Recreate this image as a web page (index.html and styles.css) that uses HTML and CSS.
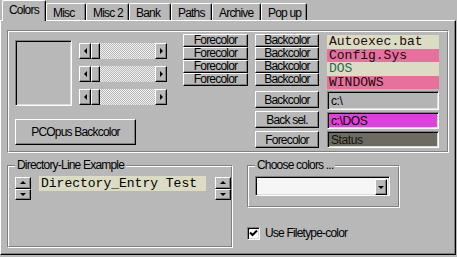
FILE: index.html
```html
<!DOCTYPE html>
<html lang="en">

<head>
    <meta charset="UTF-8">
    <title>Colors</title>
    <link rel="stylesheet" href="styles.css">
</head>

<body>
    <div class="tabs">
        <div class="tab active">Colors</div>
        <div class="tab">Misc</div>
        <div class="tab">Misc 2</div>
        <div class="tab">Bank</div>
        <div class="tab">Paths</div>
        <div class="tab">Archive</div>
        <div class="tab">Pop up</div>
    </div>

    <div class="page">
        <!-- colour settings -->
        <div class="etch top-group">
            <div class="etch-in top-inner">
                <div class="col-preview">
                    <div class="preview-row">
                        <div class="preview sunken"></div>
                        <div class="scrolls">
                            <div class="scroll"><span class="sbtn"><i class="arr-l"></i></span><span class="thumb"></span><span class="track"></span><span class="sbtn"><i class="arr-r"></i></span></div>
                            <div class="scroll"><span class="sbtn"><i class="arr-l"></i></span><span class="thumb"></span><span class="track"></span><span class="sbtn"><i class="arr-r"></i></span></div>
                            <div class="scroll"><span class="sbtn"><i class="arr-l"></i></span><span class="thumb"></span><span class="track"></span><span class="sbtn"><i class="arr-r"></i></span></div>
                        </div>
                    </div>
                    <div class="btn big">PCOpus Backcolor</div>
                </div>

                <div class="col-fore">
                    <div class="btn small">Forecolor</div>
                    <div class="btn small">Forecolor</div>
                    <div class="btn small">Forecolor</div>
                    <div class="btn small">Forecolor</div>
                </div>

                <div class="col-back">
                    <div class="btn small">Backcolor</div>
                    <div class="btn small">Backcolor</div>
                    <div class="btn small">Backcolor</div>
                    <div class="btn small">Backcolor</div>
                    <div class="btn tall first">Backcolor</div>
                    <div class="btn tall">Back sel.</div>
                    <div class="btn tall">Forecolor</div>
                </div>

                <div class="col-samples">
                    <div class="sample cream">Autoexec.bat</div>
                    <div class="sample pink">Config.Sys</div>
                    <div class="sample cream green">DOS</div>
                    <div class="sample pink">WINDOWS</div>
                    <div class="field sunken dir first">c:\</div>
                    <div class="field sunken sel">c:\DOS</div>
                    <div class="field sunken status">Status</div>
                </div>
            </div>
        </div>

        <div class="bottom">
            <div class="etch dir-group">
                <div class="etch-in group-in">
                    <span class="legend">Directory-Line Example</span>
                    <div class="dir-row">
                        <div class="spin">
                            <span class="spin-btn"><i class="arr-u"></i></span>
                            <span class="spin-btn"><i class="arr-d"></i></span>
                        </div>
                        <div class="dir-text">Directory_Entry Test</div>
                        <div class="spin right">
                            <span class="spin-btn"><i class="arr-u"></i></span>
                            <span class="spin-btn"><i class="arr-d"></i></span>
                        </div>
                    </div>
                </div>
            </div>

            <div class="right-col">
                <div class="etch choose-group">
                    <div class="etch-in group-in choose-in">
                        <span class="legend">Choose colors ...</span>
                        <div class="combo sunken">
                            <span class="combo-btn"><i class="arr-d"></i></span>
                        </div>
                    </div>
                </div>
                <div class="check">
                    <span class="check-box sunken">
                        <svg width="9" height="9" viewBox="0 0 9 9">
                            <path d="M1 3.5 L3.5 6 L8 1.5" stroke="#000" stroke-width="2" fill="none" />
                        </svg>
                    </span>
                    Use Filetype-color
                </div>
            </div>
        </div>
    </div>
</body>

</html>
```

FILE: styles.css
```css
body {
    margin: 0;
    width: 457px;
    height: 257px;
    background: #b8b8b8;
    font-family: "Liberation Sans", Arial, sans-serif;
    font-size: 12px;
    letter-spacing: -0.8px;
    color: #000;
    overflow: hidden;
}

/* tabs */
.tabs {
    display: flex;
    align-items: flex-end;
    height: 20px;
    padding-left: 2px;
}

.tab {
    height: 17px;
    box-sizing: border-box;
    padding: 2px 0 0 6px;
    border: 1px solid;
    border-color: #fff #000 transparent #fff;
    border-bottom: 0;
    border-radius: 2px 2px 0 0;
    box-shadow: inset -1px 0 #808080;
    line-height: 14px;
}

.tab:nth-child(2) { width: 40px; }
.tab:nth-child(3) { width: 43px; }
.tab:nth-child(4) { width: 42px; }
.tab:nth-child(5) { width: 41px; }
.tab:nth-child(6) { width: 49px; }
.tab:nth-child(7) { width: 46px; }

.tab.active {
    position: relative;
    z-index: 1;
    width: 44px;
    height: 21px;
    margin-bottom: -1px;
    padding: 2px 0 0 6px;
    background: #b8b8b8;
}

/* page */
.page {
    width: 456px;
    height: 235px;
    box-sizing: border-box;
    border: 1px solid;
    border-color: #fff #000 #000 #fff;
    box-shadow: inset -1px -1px #808080;
    padding: 9px 0 0 6px;
}

.etch {
    box-sizing: border-box;
    border: 1px solid;
    border-color: #808080 #fff #fff #808080;
}

.etch-in {
    height: 100%;
    box-sizing: border-box;
    border: 1px solid;
    border-color: #fff #808080 #808080 #fff;
}

.top-group {
    width: 442px;
    height: 123px;
}

.top-inner {
    display: flex;
    padding: 2px 0 0 6px;
}

/* bevels */
.btn,
.sbtn,
.thumb,
.spin-btn,
.combo-btn {
    box-sizing: border-box;
    border: 1px solid;
    border-color: #fff #000 #000 #fff;
    box-shadow: inset -1px -1px #808080;
    background: #b8b8b8;
}

.sunken {
    box-sizing: border-box;
    border: 1px solid;
    border-color: #808080 #fff #fff #808080;
    box-shadow: inset 1px 1px #000, inset -1px -1px #dcdcdc;
}

.btn {
    display: flex;
    align-items: center;
    justify-content: center;
}

.btn.small {
    height: 13px;
    line-height: 11px;
}

.btn.tall {
    height: 17px;
    margin-top: 3px;
}

.btn.tall.first {
    margin-top: 5px;
}

.btn.big {
    width: 121px;
    height: 26px;
    margin-top: 13px;
}

/* preview + scrollbars */
.col-preview {
    width: 152px;
    padding-top: 6px;
}

.preview-row {
    display: flex;
    gap: 7px;
}

.preview {
    width: 57px;
    height: 66px;
}

.scrolls {
    display: flex;
    flex-direction: column;
    gap: 7px;
    padding-top: 3px;
    width: 88px;
}

.scroll {
    display: flex;
    height: 16px;
}

.sbtn {
    width: 12px;
    display: flex;
    align-items: center;
    justify-content: center;
}

.thumb {
    width: 9px;
}

.track {
    flex: 1;
    background-color: #fff;
    background-image: repeating-conic-gradient(#b8b8b8 0 25%, #f0f0f0 0 50%);
    background-size: 2px 2px;
}

.arr-l,
.arr-r,
.arr-u,
.arr-d {
    display: block;
    width: 0;
    height: 0;
    border: 3px solid transparent;
}

.arr-l {
    border-right-color: #000;
    border-left-width: 0;
}

.arr-r {
    border-left-color: #000;
    border-right-width: 0;
}

.arr-u {
    border-bottom-color: #000;
    border-top-width: 0;
}

.arr-d {
    border-top-color: #000;
    border-bottom-width: 0;
}

/* button columns */
.col-fore {
    width: 65px;
    margin-left: 16px;
}

.col-back {
    width: 64px;
    margin-left: 7px;
}

.col-samples {
    width: 112px;
    margin-left: 8px;
    padding-top: 1px;
}

.sample {
    height: 13.5px;
    line-height: 14px;
    padding-left: 2px;
    font-family: "Liberation Mono", "Courier New", monospace;
    font-size: 13px;
    letter-spacing: 0;
    color: #200808;
    overflow: hidden;
}

.cream {
    background: #dcdcc4;
}

.pink {
    background: #e8709f;
}

.green {
    color: #1e6a4e;
}

.field {
    height: 17px;
    margin-top: 2px;
    padding-left: 3px;
    line-height: 16px;
    letter-spacing: -0.4px;
}

.field.first {
    height: 19px;
    line-height: 18px;
}

.field.dir {
    background: #b4b4b4;
}

.field.sel {
    background: #e040dc;
}

.field.status {
    background: #6e6b60;
    color: #111;
}

/* bottom area */
.bottom {
    display: flex;
    margin-top: 12px;
}

.group-in {
    position: relative;
}

.legend {
    position: absolute;
    top: -9px;
    left: 6px;
    padding: 0 2px;
    background: #b8b8b8;
    line-height: 14px;
}

.dir-group {
    width: 226px;
    height: 83px;
}

.dir-group .group-in {
    padding: 10px 0 0 6px;
}

.dir-row {
    display: flex;
    align-items: flex-start;
}

.spin {
    display: flex;
    flex-direction: column;
    width: 16px;
}

.spin.right {
    margin-left: 9px;
}

.spin-btn {
    height: 11.5px;
    display: flex;
    align-items: center;
    justify-content: center;
}

.dir-text {
    width: 167px;
    height: 15px;
    margin: -1px 0 0 8px;
    padding-left: 2px;
    box-sizing: border-box;
    background: #dcdcc4;
    font-family: "Liberation Mono", "Courier New", monospace;
    font-size: 13px;
    letter-spacing: 0;
    line-height: 15px;
}

.right-col {
    margin-left: 14px;
}

.choose-group {
    width: 153px;
    height: 43px;
}

.choose-in {
    padding: 9px 0 0 6px;
}

.combo {
    width: 135px;
    height: 20px;
    background: #f6f6f6;
    display: flex;
    justify-content: flex-end;
    padding: 2px;
}

.combo-btn {
    width: 12px;
    height: 16px;
    display: flex;
    align-items: center;
    justify-content: center;
}

.check {
    display: flex;
    align-items: center;
    margin-top: 18px;
    gap: 5px;
}

.check-box {
    width: 13px;
    height: 13px;
    background: #fff;
    display: flex;
    align-items: center;
    justify-content: center;
}
```
